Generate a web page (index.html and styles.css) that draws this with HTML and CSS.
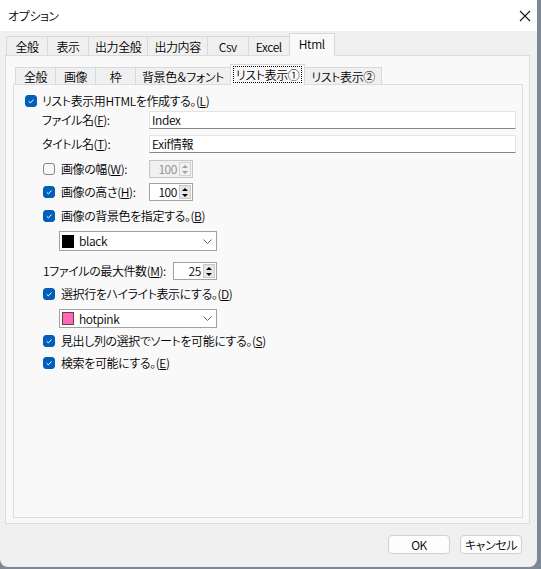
FILE: index.html
```html
<!DOCTYPE html>
<html lang="ja">
<head>
<meta charset="utf-8">
<title>オプション</title>
<link rel="stylesheet" href="styles.css">
</head>
<body>
<div class="window">
  <div class="titlebar">
    <span class="title">オプション</span>
    <svg class="close" width="12" height="12" viewBox="0 0 12 12"><path d="M1 1L11 11M11 1L1 11" stroke="#1a1a1a" stroke-width="1.1" fill="none"/></svg>
  </div>

  <div class="outer">
    <div class="tabs outer-tabs">
      <div class="tab">全般</div>
      <div class="tab">表示</div>
      <div class="tab">出力全般</div>
      <div class="tab">出力内容</div>
      <div class="tab">Csv</div>
      <div class="tab">Excel</div>
      <div class="tab active">Html</div>
    </div>
    <div class="panel outer-panel">
      <div class="tabs inner-tabs">
        <div class="tab">全般</div>
        <div class="tab">画像</div>
        <div class="tab">枠</div>
        <div class="tab">背景色＆フォント</div>
        <div class="tab active"><span class="focus">リスト表示①</span></div>
        <div class="tab">リスト表示②</div>
      </div>
      <div class="panel inner-panel">
        <div class="row top-check">
          <span class="cb on"><svg viewBox="0 0 12 12"><path d="M3.2 6.3L5.2 8.3L9 4.3" stroke="#fff" stroke-width="1.2" fill="none"/></svg></span>
          <span class="lbl">リスト表示用HTMLを作成する。(<u>L</u>)</span>
        </div>
        <div class="row field r-f">
          <span class="flabel">ファイル名(<u>F</u>):</span>
          <div class="textbox">Index</div>
        </div>
        <div class="row field r-t">
          <span class="flabel">タイトル名(<u>T</u>):</span>
          <div class="textbox">Exif情報</div>
        </div>
        <div class="row sub r-w">
          <span class="check-lbl">
            <span class="cb"></span>
            <span class="lbl">画像の幅(<u>W</u>):</span>
          </span>
          <div class="spin disabled"><span class="num">100</span><span class="spinbtn"><span class="up"></span><span class="down"></span></span></div>
        </div>
        <div class="row sub r-h">
          <span class="check-lbl">
            <span class="cb on"><svg viewBox="0 0 12 12"><path d="M3.2 6.3L5.2 8.3L9 4.3" stroke="#fff" stroke-width="1.2" fill="none"/></svg></span>
            <span class="lbl">画像の高さ(<u>H</u>):</span>
          </span>
          <div class="spin"><span class="num">100</span><span class="spinbtn"><span class="up"></span><span class="down"></span></span></div>
        </div>
        <div class="row sub r-b">
          <span class="cb on"><svg viewBox="0 0 12 12"><path d="M3.2 6.3L5.2 8.3L9 4.3" stroke="#fff" stroke-width="1.2" fill="none"/></svg></span>
          <span class="lbl">画像の背景色を指定する。(<u>B</u>)</span>
        </div>
        <div class="row combo-row r-c1">
          <div class="combo">
            <span class="swatch black"></span>
            <span class="ctext">black</span>
            <svg class="chev" width="9" height="5" viewBox="0 0 9 5"><path d="M0.5 0.5L4.5 4.5L8.5 0.5" stroke="#606060" fill="none"/></svg>
          </div>
        </div>
        <div class="row sub r-m">
          <span class="mlabel">1ファイルの最大件数(<u>M</u>):</span>
          <div class="spin"><span class="num">25</span><span class="spinbtn"><span class="up"></span><span class="down"></span></span></div>
        </div>
        <div class="row sub r-d">
          <span class="cb on"><svg viewBox="0 0 12 12"><path d="M3.2 6.3L5.2 8.3L9 4.3" stroke="#fff" stroke-width="1.2" fill="none"/></svg></span>
          <span class="lbl">選択行をハイライト表示にする。(<u>D</u>)</span>
        </div>
        <div class="row combo-row r-c2">
          <div class="combo">
            <span class="swatch pink"></span>
            <span class="ctext">hotpink</span>
            <svg class="chev" width="9" height="5" viewBox="0 0 9 5"><path d="M0.5 0.5L4.5 4.5L8.5 0.5" stroke="#606060" fill="none"/></svg>
          </div>
        </div>
        <div class="row sub r-s">
          <span class="cb on"><svg viewBox="0 0 12 12"><path d="M3.2 6.3L5.2 8.3L9 4.3" stroke="#fff" stroke-width="1.2" fill="none"/></svg></span>
          <span class="lbl">見出し列の選択でソートを可能にする。(<u>S</u>)</span>
        </div>
        <div class="row sub r-e">
          <span class="cb on"><svg viewBox="0 0 12 12"><path d="M3.2 6.3L5.2 8.3L9 4.3" stroke="#fff" stroke-width="1.2" fill="none"/></svg></span>
          <span class="lbl">検索を可能にする。(<u>E</u>)</span>
        </div>
      </div>
    </div>
  </div>

  <div class="buttons">
    <button class="btn">OK</button>
    <button class="btn">キャンセル</button>
  </div>
</div>
</body>
</html>
```

FILE: styles.css
```css
* { box-sizing: border-box; }

html, body {
  margin: 0;
  padding: 0;
}

body {
  background: #7d8796;
  font-family: "Noto Sans CJK JP", "Noto Sans", sans-serif;
  font-size: 12px;
  font-weight: 350;
  font-feature-settings: "palt";
  letter-spacing: -0.4px;
  color: #000;
  line-height: 1;
}

.window {
  width: 537px;
  height: 567px;
  background: #f0f0f0;
  border-radius: 0 0 8px 8px;
  overflow: hidden;
  display: flex;
  flex-direction: column;
}

.titlebar {
  height: 31px;
  flex: none;
  background: #fff;
  display: flex;
  align-items: center;
  justify-content: space-between;
  padding: 0 6px 0 8px;
}

.title {
  font-size: 12px;
}

.close {
  display: block;
}

.outer {
  flex: 1;
  display: flex;
  flex-direction: column;
  margin: 3px 7px 0 5px;
}

/* tabs */
.tabs {
  display: flex;
  align-items: flex-end;
  flex: none;
  position: relative;
  z-index: 1;
}

.tab {
  background: #f0f0f0;
  border: 1px solid #d9d9d9;
  border-bottom: none;
  margin-left: -1px;
  display: flex;
  align-items: center;
  justify-content: center;
  white-space: nowrap;
}

.outer-tabs {
  height: 21px;
  padding-left: 2px;
}

.outer-tabs .tab {
  height: 19px;
  min-width: 42px;
  padding: 1px 6px 0;
  font-size: 12px;
}

.outer-tabs .tab.active,
.inner-tabs .tab.active {
  background: #f9f9f9;
  margin-bottom: -1px;
}

.outer-tabs .tab.active {
  height: 23px;
  padding-bottom: 3px;
  min-width: 46px;
}

.inner-tabs {
  height: 20px;
  padding-left: 3px;
}

.inner-tabs .tab {
  height: 17px;
  min-width: 41px;
  padding: 2px 6px 0;
}

.inner-tabs .tab.active {
  height: 21px;
  padding: 0 2px 1px;
}

.focus {
  border: 1px dotted #000;
  padding: 2px 2px 1px;
}

/* panels */
.panel {
  background: #f9f9f9;
  border: 1px solid #dcdcdc;
}

.outer-panel {
  flex: 1;
  display: flex;
  flex-direction: column;
  padding: 8px 6px 5px 7px;
}

.inner-panel {
  flex: 1;
  padding: 7px 6px 0 11px;
}

/* rows */
.row {
  display: flex;
  align-items: center;
  height: 18px;
}

.lbl, .flabel, .mlabel {
  white-space: nowrap;
}

.cb {
  width: 12px;
  height: 12px;
  border-radius: 3px;
  border: 1px solid #858585;
  background: #f7f7f7;
  flex: none;
  display: block;
}

.cb.on {
  background: #005fb8;
  border-color: #005fb8;
}

.cb svg {
  display: block;
  width: 10px;
  height: 10px;
}

.top-check .cb { margin-right: 5px; }
.sub .cb { margin-right: 6px; }

.field { margin-left: 17px; }
.r-f { margin-top: 1px; }
.r-t { margin-top: 6px; }

.flabel {
  width: 107px;
  flex: none;
}

.textbox {
  flex: 1;
  height: 18px;
  background: #fff;
  border: 1px solid #e3e3e3;
  border-bottom-color: #868686;
  padding-left: 2px;
  display: flex;
  align-items: center;
}

.sub { margin-left: 18px; }
.r-w { margin-top: 7px; }
.r-h { margin-top: 5px; }
.r-b { margin-top: 6px; }
.r-m { margin-top: 11px; }
.r-d { margin-top: 5px; }
.r-s { margin-top: 4px; }
.r-e { margin-top: 4px; }

.check-lbl {
  width: 106px;
  flex: none;
  display: flex;
  align-items: center;
}

.mlabel {
  width: 130px;
  flex: none;
}

/* spin */
.spin {
  width: 44px;
  height: 18px;
  background: #fff;
  border: 1px solid #a3a3a3;
  display: flex;
  align-items: center;
  padding: 1px;
}

.spin .num {
  flex: 1;
  text-align: right;
  padding-right: 2px;
}

.spinbtn {
  width: 12px;
  height: 14px;
  background: #e6e6e6;
  border: 1px solid #c8c8c8;
  display: flex;
  flex-direction: column;
  align-items: center;
  justify-content: space-around;
}

.spinbtn .up {
  width: 0;
  height: 0;
  border-left: 3px solid transparent;
  border-right: 3px solid transparent;
  border-bottom: 3px solid #000;
}

.spinbtn .down {
  width: 0;
  height: 0;
  border-left: 3px solid transparent;
  border-right: 3px solid transparent;
  border-top: 3px solid #000;
}

.spin.disabled {
  background: #f0f0f0;
  border-color: #c6c6c6;
  color: #8d8d8d;
}

.spin.disabled .spinbtn {
  background: #f0f0f0;
  border-color: #d4d4d4;
}

.spin.disabled .up { border-bottom-color: #a0a0a0; }
.spin.disabled .down { border-top-color: #a0a0a0; }

/* combo */
.combo-row {
  height: 20px;
  margin-left: 34px;
}

.r-c1 { margin-top: 6px; }
.r-c2 { margin-top: 6px; height: 19px; }

.combo {
  width: 158px;
  height: 100%;
  background: #fff;
  border: 1px solid #a0a0a0;
  display: flex;
  align-items: center;
  padding-left: 2px;
}

.swatch {
  width: 12px;
  height: 13px;
  flex: none;
  margin-right: 5px;
}

.swatch.black { background: #000; }
.swatch.pink { background: #ff69b4; border: 1px solid #6a3a52; }

.ctext { flex: 1; }

.chev {
  display: block;
  margin-right: 4px;
}

/* buttons */
.buttons {
  height: 43px;
  flex: none;
  display: flex;
  justify-content: flex-end;
  align-items: flex-start;
  gap: 10px;
  padding: 11px 15px 0 0;
}

.btn {
  width: 62px;
  height: 19px;
  background: #fdfdfd;
  border: 1px solid #d0d0d0;
  border-radius: 4px;
  font-family: inherit;
  font-size: 12px;
  font-weight: 350;
  font-feature-settings: "palt";
  letter-spacing: -0.4px;
  color: #000;
  padding: 0;
  line-height: 1;
}
```
